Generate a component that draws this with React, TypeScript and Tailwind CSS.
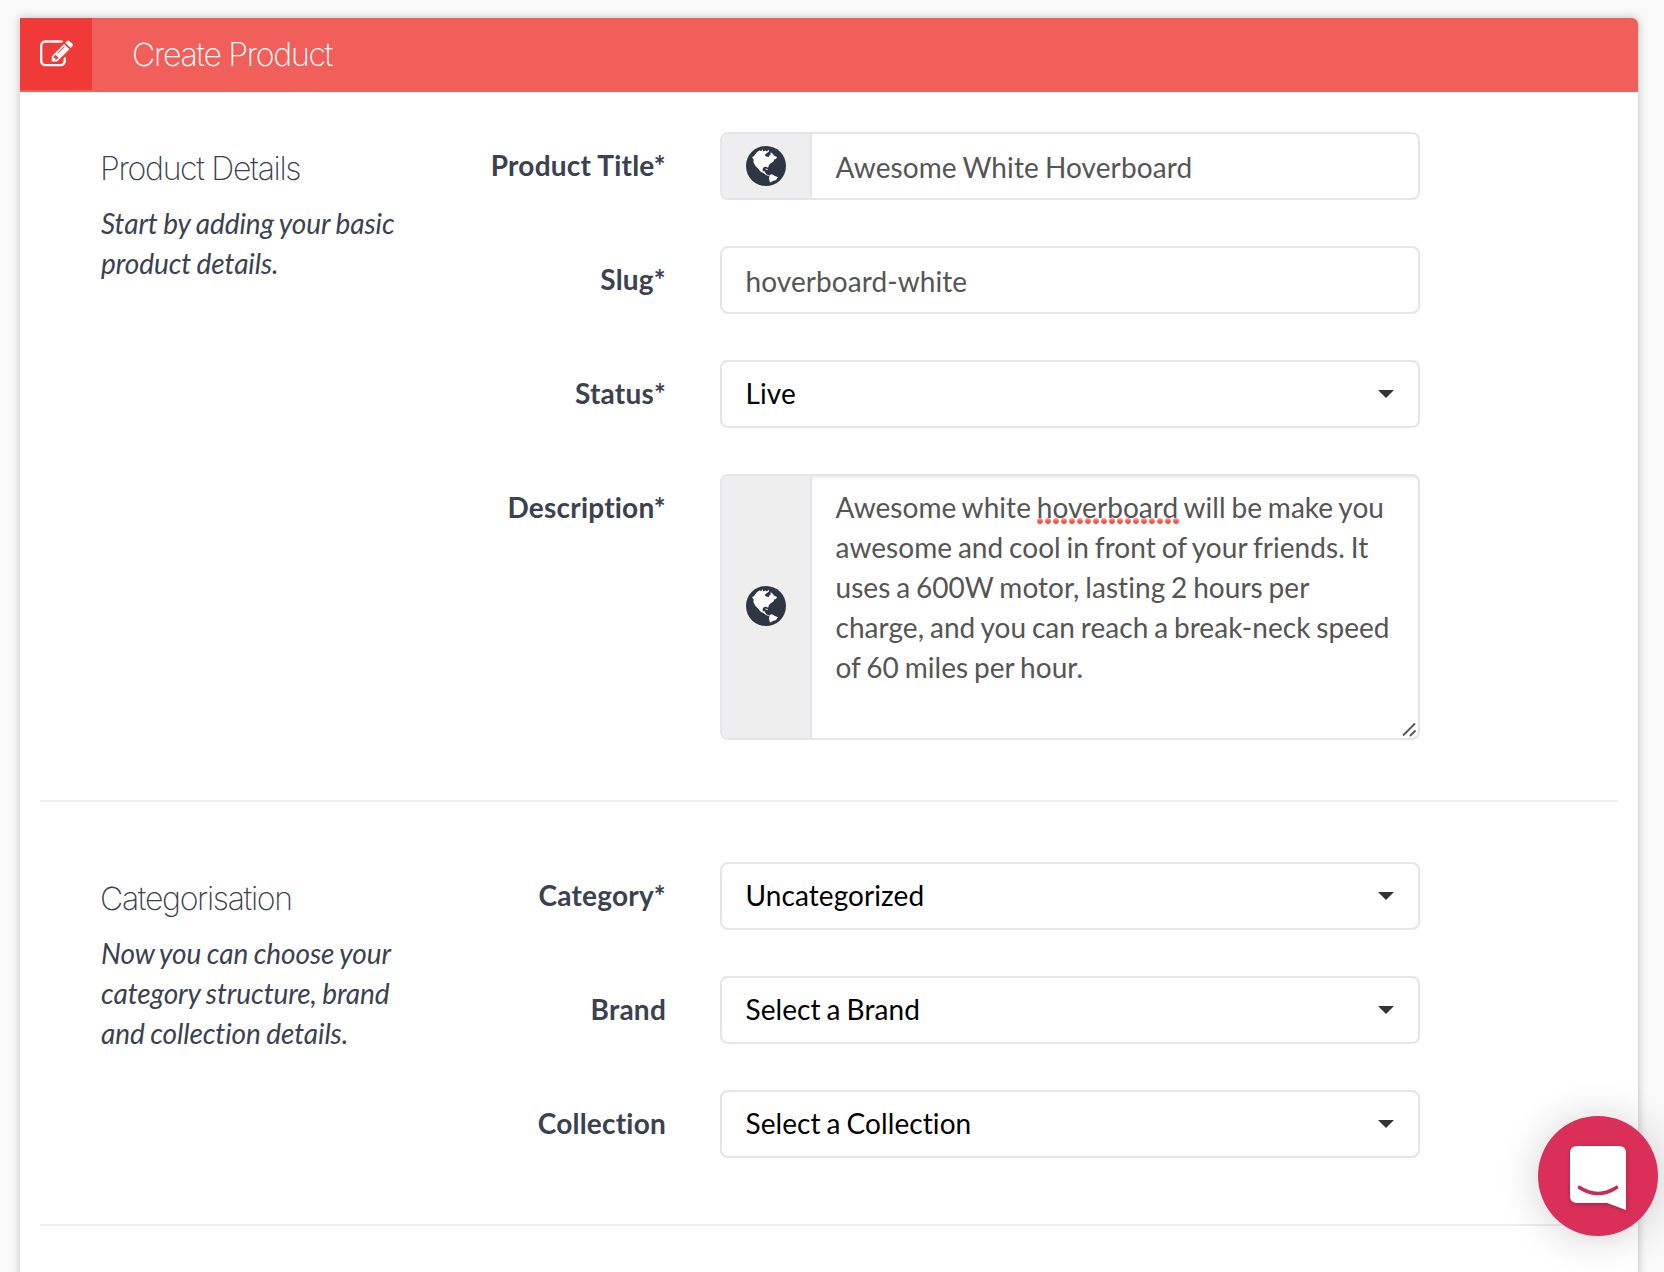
import React from "react";

const PENCIL =
  "M888 1184l116-116-152-152-116 116v56h96v96h56zm440-720q-16-16-33 1l-350 350q-17 17-1 33t33-1l350-350q17-17 1-33zm80 594v190q0 119-84.5 203.5t-203.5 84.5h-832q-119 0-203.5-84.5t-84.5-203.5v-832q0-119 84.5-203.5t203.5-84.5h832q63 0 117 25 15 7 18 23 3 17-9 29l-49 49q-14 14-32 8-23-6-45-6h-832q-66 0-113 47t-47 113v832q0 66 47 113t113 47h832q66 0 113-47t47-113v-126q0-13 9-22l64-64q15-15 35-7t20 29zm-96-738l288 288-672 672h-288v-288zm444 132l-92 92-288-288 92-92q28-28 68-28t68 28l152 152q28 28 28 68t-28 68z";

function Globe() {
  return (
    <svg className="size-10" viewBox="0 0 40 40" fill="none">
      <circle cx="20" cy="20" r="20" fill="#2e3543" />
      <path
        fill="#fff"
        d="M6 11.500 8 10 11 6 13.500 4.500 15.500 5 16.500 3 17.500 5.500 19.500 4.500 21 5.500 22.500 3.500 23 5.500 21 7 18.500 9 20 10.500 23 11 23.500 9 25 8.500 24 6.500 26 7 28 9.500 31 11 30 13 28 13.500 27.500 15.500 25 17 23 19 22 22 20.800 20.800 18 21 16.500 23 17 25.500 18.500 25 19.200 26.500 20.500 28.500 23 29.200 22.500 30 19.500 28.800 17.500 27 15 26 11.500 22 9.500 20 7.500 16.500 7.500 13Z"
      />
      <path fill="#fff" d="M19.500 22.500 22 23.300 21.600 24 19.500 23.400z" />
      <path fill="#fff" d="M23.500 29 26 28.200 28.500 29.800 32 31.200 30 34 27 35 24 36.500 23 33z" />
    </svg>
  );
}

function Label({ children }: { children: React.ReactNode }) {
  return (
    <label className="w-[266px] shrink-0 pt-[13px] text-right font-bold tracking-[0.220px]">{children}</label>
  );
}

function Row({ label, children }: { label: string; children: React.ReactNode }) {
  return (
    <div className="flex items-start gap-[54px]">
      <Label>{label}</Label>
      <div className="w-[700px]">{children}</div>
    </div>
  );
}

function Select({ value }: { value: string }) {
  return (
    <button className="flex h-[68px] w-full items-center justify-between rounded-lg border-2 border-[#e4e4ea] bg-white pr-6 pl-[23.500px] tracking-[0.080px] text-black [word-spacing:-1.300px]">
      <span className="pb-[2px]">{value}</span>
      <svg className="h-2 w-4" viewBox="0 0 16 8">
        <path d="M0 0h16L8 8z" fill="#333" />
      </svg>
    </button>
  );
}

function Addon() {
  return (
    <div className="flex w-[90px] shrink-0 items-center justify-center border-r-2 border-[#e4e4ea] bg-[#eee]">
      <Globe />
    </div>
  );
}

function Section({ title, text, children }: { title: string; text: string; children: React.ReactNode }) {
  return (
    <section className="flex">
      <div className="w-[300px] shrink-0 pt-[17px]">
        <h2 className="font-['Inter'] text-[32px] leading-10 font-extralight tracking-[-1.300px] whitespace-nowrap">
          {title}
        </h2>
        <p className="mt-[14px] pl-px tracking-[-0.080px] italic [word-spacing:-1px]">{text}</p>
      </div>
      <div className="flex flex-col gap-[46px]">{children}</div>
    </section>
  );
}

export default function App() {
  return (
    <div className="h-[1272px] overflow-hidden bg-[#f9f9f9] px-5 pt-[18px] font-['Lato',sans-serif] text-[28px] leading-10 text-[#3a4150]">
      <main className="h-[1300px] w-[1618px] overflow-hidden rounded-tr-md bg-white shadow-[0_0_8px_rgba(0,0,0,0.25)]">
        <header className="flex h-[74px] bg-[#f05f5a] text-white">
          <div className="flex size-[72px] items-center justify-center bg-[#ef3a37] pl-px">
            <svg className="size-[33px]" viewBox="0 0 1792 1792" fill="currentColor">
              <path d={PENCIL} />
            </svg>
          </div>
          <h1 className="ml-10 pt-[17px] font-['Inter'] text-[32px] leading-10 font-extralight tracking-[-1.300px]">
            Create Product
          </h1>
        </header>
        <div className="px-5 pt-10">
          <div className="pl-[60px]">
            <Section title="Product Details" text="Start by adding your basic product details.">
              <Row label="Product Title*">
                <div className="flex h-[68px] overflow-hidden rounded-lg border-2 border-[#e4e4ea] bg-white text-[#555]">
                  <Addon />
                  <div className="pt-[13px] pl-[23.500px] tracking-[0.100px] [word-spacing:-1.200px]">
                    Awesome White Hoverboard
                  </div>
                </div>
              </Row>
              <Row label="Slug*">
                <div className="h-[68px] rounded-lg border-2 border-[#e4e4ea] bg-white pt-[13px] pl-[23.500px] tracking-[0.080px] text-[#555]">
                  hoverboard-white
                </div>
              </Row>
              <Row label="Status*">
                <Select value="Live" />
              </Row>
              <Row label="Description*">
                <div className="relative flex h-[266px] overflow-hidden rounded-lg border-2 border-[#e4e4ea] bg-white text-[#555]">
                  <div className="flex w-[90px] shrink-0 items-center justify-center border-r-2 border-[#e4e4ea] bg-[#eee] pb-[2px]">
                    <Globe />
                  </div>
                  <div className="flex-1 pt-[11px] pl-[23.500px] tracking-[0.050px] whitespace-nowrap shadow-[inset_0_2px_3px_rgba(0,0,0,0.075)] [word-spacing:-1.400px]">
                    Awesome white{" "}
                    <span className="relative">
                      hoverboard
                      <svg className="absolute bottom-0 left-0 h-[6px] w-[142px]" viewBox="0 0 142 6">
                        <defs>
                          <linearGradient id="dots" gradientUnits="userSpaceOnUse" x1="0" y1="0" x2="0" y2="6">
                            <stop offset="0" stopColor="#fda9a4" />
                            <stop offset="0.600" stopColor="#fc4f46" />
                          </linearGradient>
                        </defs>
                        <line x1="3" y1="3" x2="142" y2="3" stroke="url(#dots)" strokeWidth="5.800" strokeLinecap="round" strokeDasharray="0 8" />
                      </svg>
                    </span>{" "}
                    will be make you
                    <br />
                    awesome and cool in front of your friends. It
                    <br />
                    uses a 600W motor, lasting 2 hours per
                    <br />
                    charge, and you can reach a break-neck speed
                    <br />
                    of 60 miles per hour.
                  </div>
                  <svg className="absolute right-[1px] bottom-0 size-4" viewBox="0 0 16 16">
                    <path d="M2 13.500 14 1.500M9 14l5.500-5.500" stroke="#555" strokeWidth="1.800" />
                  </svg>
                </div>
              </Row>
            </Section>
          </div>
          <hr className="mt-[60px] mb-[60px] border-t-2 border-[#eee]" />
          <div className="pl-[60px]">
            <Section title="Categorisation" text="Now you can choose your category structure, brand and collection details.">
              <Row label="Category*">
                <Select value="Uncategorized" />
              </Row>
              <Row label="Brand">
                <Select value="Select a Brand" />
              </Row>
              <Row label="Collection">
                <Select value="Select a Collection" />
              </Row>
            </Section>
          </div>
          <hr className="mt-[66px] border-t-2 border-[#eee]" />
        </div>
      </main>
      <button className="fixed top-[1116px] left-[1538px] flex size-[120px] items-center justify-center rounded-full bg-[#da2f58] shadow-[0_2px_40px_rgba(0,0,0,0.18)]">
        <svg className="mt-1 h-16 w-14 drop-shadow-[0_1px_2px_rgba(0,0,0,0.25)]" viewBox="0 0 56 64" fill="none">
          <path d="M7 0H49Q56 0 56 7V64L37 57H7Q0 57 0 50V7Q0 0 7 0Z" fill="#fff" />
          <path d="M9.500 41.500Q28 53.500 46.500 41.500" stroke="#c92c53" strokeWidth="3.600" strokeLinecap="round" />
        </svg>
      </button>
    </div>
  );
}
